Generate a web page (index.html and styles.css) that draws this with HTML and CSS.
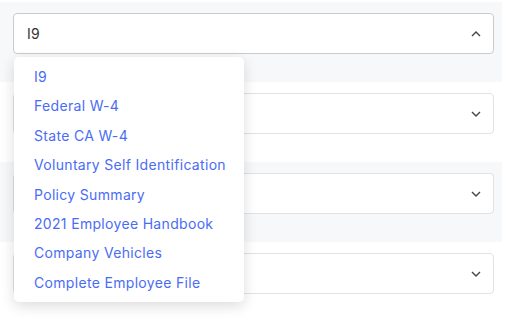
FILE: index.html
```html
<!DOCTYPE html>
<html lang="en">

<head>
  <title>Documents</title>
  <link rel="stylesheet" href="styles.css">
</head>

<body>
  <div class="form-list">
    <div class="form-row shaded">
      <div class="select open">
        <span class="select-value">I9</span>
        <svg class="chevron" width="10" height="6" viewBox="0 0 10 6"><path d="M1 5L5 1L9 5" /></svg>
      </div>
      <ul class="dropdown">
        <li>I9</li>
        <li>Federal W-4</li>
        <li>State CA W-4</li>
        <li>Voluntary Self Identification</li>
        <li>Policy Summary</li>
        <li>2021 Employee Handbook</li>
        <li>Company Vehicles</li>
        <li>Complete Employee File</li>
      </ul>
    </div>
    <div class="form-row">
      <div class="select">
        <span class="select-value"></span>
        <svg class="chevron" width="10" height="6" viewBox="0 0 10 6"><path d="M1 1L5 5L9 1" /></svg>
      </div>
    </div>
    <div class="form-row shaded">
      <div class="select">
        <span class="select-value"></span>
        <svg class="chevron" width="10" height="6" viewBox="0 0 10 6"><path d="M1 1L5 5L9 1" /></svg>
      </div>
    </div>
    <div class="form-row">
      <div class="select">
        <span class="select-value"></span>
        <svg class="chevron" width="10" height="6" viewBox="0 0 10 6"><path d="M1 1L5 5L9 1" /></svg>
      </div>
    </div>
  </div>
</body>

</html>
```

FILE: styles.css
```css
body {
  margin: 0;
  background-color: #fff;
  font-family: "Inter", "Noto Sans", sans-serif;
}

.form-list {
  padding-top: 2px;
  width: 502px;
}

.form-row {
  position: relative;
  height: 80px;
  padding: 11px 8px 0 13px;
  box-sizing: border-box;
}

.shaded {
  background-color: #f7f8fa;
}

.select {
  display: flex;
  align-items: center;
  justify-content: space-between;
  height: 41px;
  box-sizing: border-box;
  padding: 0 12px 0 13px;
  background-color: #fff;
  border: 1px solid #e2e2e2;
  border-radius: 4px;
}

.select.open {
  border-color: #cbcbcb;
}

.select-value {
  font-size: 14px;
  color: #333;
  letter-spacing: 0.3px;
}

.chevron path {
  fill: none;
  stroke: #444;
  stroke-width: 1.4;
}

.dropdown {
  position: absolute;
  top: 55px;
  left: 14px;
  width: 230px;
  margin: 0;
  padding: 5px 0;
  list-style: none;
  background-color: #fff;
  border-radius: 5px;
  box-shadow: 0 4px 14px rgba(0, 0, 0, 0.14);
  z-index: 2;
}

.dropdown li {
  height: 29.4px;
  line-height: 30px;
  padding-left: 20px;
  font-size: 14px;
  letter-spacing: 0.32px;
  color: #4a6cf5;
  white-space: nowrap;
}
```
